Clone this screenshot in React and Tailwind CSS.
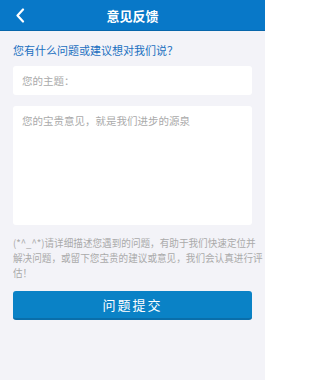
import React from "react";

export default function App() {
  const font = { fontFamily: '"Noto Sans CJK SC", "Noto Sans", sans-serif' };
  return (
    <div className="w-[265px] h-[380px] bg-[#f3f3f8] flex flex-col" style={font}>
      <div className="h-[31px] bg-[#0878c8] border-b border-[#0766ab] flex items-center relative shrink-0">
        <svg className="absolute left-[15px] top-[8px]" width="10" height="15" viewBox="0 0 10 15">
          <path d="M8 1.5 L2.5 7.5 L8 13.5" fill="none" stroke="white" strokeWidth="2.2" strokeLinecap="round" strokeLinejoin="round" />
        </svg>
        <div className="flex-1 text-center text-white font-bold text-[13px] leading-none">意见反馈</div>
      </div>
      <div className="px-[13px] flex flex-col">
        <div className="mt-[11px] text-[11px] leading-[16px] text-[#1a6fc0]">您有什么问题或建议想对我们说？</div>
        <div className="mt-[8px] h-[29px] bg-white rounded-[3px] flex items-center px-[9px] text-[10.5px] text-[#aaaaaa]">您的主题：</div>
        <div className="mt-[11px] h-[119px] bg-white rounded-[3px] px-[9px] pt-[8px] text-[10.5px] leading-[14px] text-[#aaaaaa]">您的宝贵意见，就是我们进步的源泉</div>
        <div className="mt-[10px] text-[10px] leading-[15px] text-[#aaaaaa] whitespace-nowrap flex flex-col items-start origin-left scale-x-[0.96]">
          <span>(*^_^*)请详细描述您遇到的问题，有助于我们快速定位并</span>
          <span>解决问题，或留下您宝贵的建议或意见，我们会认真进行评</span>
          <span>估！</span>
        </div>
        <div className="mt-[11px] h-[29px] bg-[#0a82c6] border-b-2 border-[#0a6eaa] rounded-[3px] flex items-center justify-center text-white text-[13px] tracking-[2px]">问题提交</div>
      </div>
    </div>
  );
}
